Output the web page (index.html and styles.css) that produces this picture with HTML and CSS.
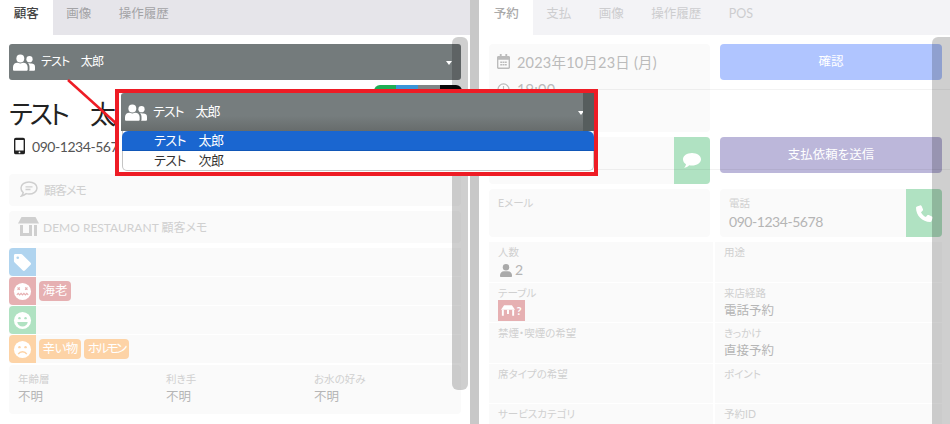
FILE: index.html
```html
<!DOCTYPE html>
<html lang="ja">
<head>
    <meta charset="UTF-8">
    <title>顧客 / 予約</title>
    <link rel="stylesheet" href="styles.css">
</head>
<body>
    <div class="app">
        <!-- Customer pane -->
        <section class="pane">
            <div class="tabs">
                <div class="tab active">顧客</div>
                <div class="tab">画像</div>
                <div class="tab">操作履歴</div>
            </div>
            <div class="pane-body">
                <div class="select">
                    <svg class="users-icon" viewBox="0 0 24 18"><circle cx="8" cy="4.6" r="4.3"/><circle cx="18" cy="5.4" r="3.4"/><path d="M0 17v-3c0-3.200 2.400-4.800 4.500-4.800 1 0 2 .8 3.500.8s2.500-.8 3.500-.8c2.100 0 4.500 1.600 4.500 4.800v3c0 .6-.4 1-1 1H1c-.6 0-1-.4-1-1z"/><path d="M17.500 18c.3-.4.500-.9.500-1.500v-2.700c0-1.600-.6-3-1.600-3.900.5-.2 1-.2 1.600-.2.900 0 1.500.5 2.500.5 1.400 0 3.500.7 3.500 3.500v3.300c0 .6-.4 1-1 1z"/></svg>
                    <span class="select-name">テスト　太郎</span>
                    <span class="caret"></span>
                </div>
                <div class="name-row">
                    <h1 class="name">テスト　太郎</h1>
                    <div class="color-strip">
                        <span class="c-green"></span><span class="c-blue"></span><span class="c-gray"></span><span class="c-black"></span>
                    </div>
                </div>
                <div class="phone">
                    <svg class="phone-icon" viewBox="0 0 12 18"><path d="M2 0h8a2 2 0 0 1 2 2v14a2 2 0 0 1-2 2H2a2 2 0 0 1-2-2V2a2 2 0 0 1 2-2zm-.500 2.500v11.500h9V2.500z" fill-rule="evenodd"/><circle cx="6" cy="16" r="1" fill="#fff"/></svg>
                    <span>090-1234-5678</span>
                </div>
                <div class="memo">
                    <svg class="memo-icon" viewBox="0 0 18 16"><path d="M9 1c4.400 0 8 2.600 8 6s-3.600 6-8 6c-1 0-1.900-.1-2.800-.4C5 13.700 3.200 14.600 1.500 15c.9-1 1.500-2.200 1.700-3.300C1.800 10.600 1 8.900 1 7c0-3.400 3.600-6 8-6z" fill="none" stroke="#cfcfcf" stroke-width="1.500"/><path d="M5.500 5.800h7M5.500 8.500h5" stroke="#cfcfcf" stroke-width="1.300"/></svg>
                    <span class="memo-short">顧客メモ</span>
                </div>
                <div class="memo">
                    <svg class="store-icon" viewBox="0 0 21 19"><path d="M3.500 0h14L21 6.500H0z" fill="#cfcfcf"/><path d="M2 8h3v8h6V8h3v11H2zM16 8h3v11h-3z" fill="#cfcfcf"/></svg>
                    <span>DEMO RESTAURANT 顧客メモ</span>
                </div>
                <div class="tag-row">
                    <div class="tag-icon bg-blue">
                        <svg viewBox="0 0 20 20"><path d="M1 2.500C1 1.600 1.600 1 2.500 1h6c.5 0 .9.200 1.200.5l8.800 8.800c.6.600.6 1.500 0 2.100l-6 6c-.6.600-1.500.6-2.100 0L1.500 9.700C1.200 9.400 1 9 1 8.500z" fill="#fff"/><circle cx="5" cy="5" r="1.400" fill="#b0d4ef"/></svg>
                    </div>
                </div>
                <div class="tag-row">
                    <div class="tag-icon bg-red">
                        <svg viewBox="0 0 20 20"><circle cx="10" cy="10" r="9" fill="#fff"/><path d="M4.800 5.800l2.400 2.400m0-2.400L4.800 8.200m8-2.400l2.400 2.400m0-2.400l-2.400 2.400M4 13.500l1.500-1.500 1.500 1.500L8.500 12l1.500 1.500 1.500-1.500 1.500 1.500 1.500-1.500 1.500 1.500" fill="none" stroke="#e6b0b2" stroke-width="1.200"/></svg>
                    </div>
                    <span class="chip bg-red">海老</span>
                </div>
                <div class="tag-row">
                    <div class="tag-icon bg-green">
                        <svg viewBox="0 0 20 20"><circle cx="10" cy="10" r="9" fill="#fff"/><circle cx="6.800" cy="7.500" r="1.300" fill="#b0e2c2"/><circle cx="13.200" cy="7.500" r="1.300" fill="#b0e2c2"/><path d="M4.500 11.500h11c-.4 3-2.700 4.800-5.500 4.800s-5.100-1.800-5.500-4.800z" fill="#b0e2c2"/></svg>
                    </div>
                </div>
                <div class="tag-row">
                    <div class="tag-icon bg-orange">
                        <svg viewBox="0 0 20 20"><circle cx="10" cy="10" r="9" fill="#fff"/><circle cx="6.800" cy="7.500" r="1.300" fill="#fdd3a6"/><circle cx="13.200" cy="7.500" r="1.300" fill="#fdd3a6"/><path d="M5.500 14.800c1-1.600 2.600-2.400 4.500-2.400s3.500.8 4.500 2.400" fill="none" stroke="#fdd3a6" stroke-width="1.500"/></svg>
                    </div>
                    <span class="chip bg-orange chip-snug">辛い物</span>
                    <span class="chip bg-orange chip-tight">ホルモン</span>
                </div>
                <div class="info-box">
                    <div><div class="label">年齢層</div><div class="value">不明</div></div>
                    <div><div class="label">利き手</div><div class="value">不明</div></div>
                    <div><div class="label">お水の好み</div><div class="value">不明</div></div>
                </div>
            </div>
        </section>

        <div class="divider"></div>

        <!-- Reservation pane -->
        <section class="pane pane-right">
            <div class="tabs tabs-faded">
                <div class="tab active">予約</div>
                <div class="tab">支払</div>
                <div class="tab">画像</div>
                <div class="tab">操作履歴</div>
                <div class="tab">POS</div>
            </div>
            <div class="res-body">
                <div class="res-top">
                    <div class="card card-date">
                        <div class="date-line">
                            <svg class="line-icon" viewBox="0 0 14 16"><path d="M3 0h2v2h4V0h2v2h1.500c.8 0 1.500.7 1.500 1.500v11c0 .8-.7 1.500-1.500 1.500h-11C.7 16 0 15.300 0 14.500v-11C0 2.700.7 2 1.500 2H3zM1.500 6v8.500h11V6z" fill="#bbb" fill-rule="evenodd"/><path d="M3.500 8h2v1.500h-2zM6 8h2v1.500H6zM8.500 8h2v1.500h-2zM3.500 10.800h2v1.500h-2zM6 10.800h2v1.500H6zM8.500 10.800h2v1.500h-2z" fill="#bbb"/></svg>
                            <span>2023年10月23日 (月)</span>
                        </div>
                        <div class="date-line">
                            <svg class="line-icon" viewBox="0 0 16 16"><circle cx="8" cy="8" r="6.800" fill="none" stroke="#bbb" stroke-width="1.500"/><path d="M8 3.800V8l2.800 1.800" fill="none" stroke="#bbb" stroke-width="1.400"/></svg>
                            <span>19:00</span>
                        </div>
                    </div>
                    <div class="btn btn-confirm">確認</div>
                    <div class="card card-comment">
                        <div class="side-btn">
                            <svg class="comment-icon" viewBox="0 0 18 15"><path d="M9 0c5 0 9 2.800 9 6.300s-4 6.300-9 6.300c-1 0-1.900-.1-2.800-.3C5 13.500 3 14.800 1 15c1-1 1.800-2.400 2-3.700C1.200 10.200 0 8.400 0 6.300 0 2.800 4 0 9 0z" fill="#fff"/></svg>
                        </div>
                    </div>
                    <div class="btn btn-pay">支払依頼を送信</div>
                    <div class="card card-contact">
                        <div class="label">Eメール</div>
                    </div>
                    <div class="card card-contact">
                        <div class="label">電話</div>
                        <div class="contact-value">090-1234-5678</div>
                        <div class="side-btn">
                            <svg class="call-icon" viewBox="0 0 18 18"><path d="M4.200.4L1 1.500C.4 1.700 0 2.300 0 3c0 8.300 6.700 15 15 15 .7 0 1.300-.4 1.500-1l1.100-3.200c.2-.7-.1-1.400-.7-1.700l-3.500-1.500c-.6-.2-1.200-.1-1.600.4l-1.400 1.700C8 11.500 6.400 9.900 5.300 7.600L7 6.200c.5-.4.600-1 .4-1.600L5.900 1.100C5.600.5 4.900.2 4.200.4z" fill="#fff"/></svg>
                        </div>
                    </div>
                </div>
                <div class="res-table">
                    <div class="cell">
                        <div class="label">人数</div>
                        <div class="value count">
                            <svg class="person-icon" viewBox="0 0 12 13"><circle cx="6" cy="3.200" r="3.200" fill="#aaa"/><path d="M0 11.500C0 9 1.800 7.200 3.800 7.200h4.400c2 0 3.800 1.800 3.800 4.300V12c0 .6-.4 1-1 1H1c-.6 0-1-.4-1-1z" fill="#aaa"/></svg>
                            <span>2</span>
                        </div>
                    </div>
                    <div class="cell"><div class="label">用途</div></div>
                    <div class="cell">
                        <div class="label">テーブル</div>
                        <div class="table-badge">
                            <svg viewBox="0 0 16 12"><path d="M3.500 0h9L16 5H0z" fill="#fff"/><path d="M1 5h2.200v7H1zM6.900 5h2.200v5H6.900zM12.800 5H15v7h-2.200z" fill="#fff"/></svg>
                            <span>?</span>
                        </div>
                    </div>
                    <div class="cell"><div class="label">来店経路</div><div class="value">電話予約</div></div>
                    <div class="cell"><div class="label">禁煙・喫煙の希望</div></div>
                    <div class="cell"><div class="label">きっかけ</div><div class="value">直接予約</div></div>
                    <div class="cell"><div class="label">席タイプの希望</div></div>
                    <div class="cell"><div class="label">ポイント</div></div>
                    <div class="cell"><div class="label">サービスカテゴリ</div></div>
                    <div class="cell"><div class="label">予約ID</div></div>
                </div>
            </div>
        </section>
    </div>

    <!-- Scrollbars sit over the panes -->
    <div class="scroll-thumb scroll-left"></div>
    <div class="scroll-thumb scroll-right"></div>
    <div class="faint-line line-a"></div>
    <div class="faint-line line-b"></div>

    <!-- Callout: line from the select to the opened dropdown -->
    <svg class="callout-line" width="130" height="135" viewBox="0 0 130 135"><line x1="68" y1="80" x2="118" y2="125" stroke="#ee1c25" stroke-width="2.500"/></svg>
    <div class="callout">
        <div class="select select-open">
            <svg class="users-icon" viewBox="0 0 24 18"><circle cx="8" cy="4.6" r="4.3"/><circle cx="18" cy="5.4" r="3.4"/><path d="M0 17v-3c0-3.200 2.400-4.800 4.500-4.800 1 0 2 .8 3.500.8s2.500-.8 3.500-.8c2.100 0 4.500 1.600 4.500 4.800v3c0 .6-.4 1-1 1H1c-.6 0-1-.4-1-1z"/><path d="M17.500 18c.3-.4.500-.9.500-1.500v-2.700c0-1.600-.6-3-1.600-3.900.5-.2 1-.2 1.600-.2.900 0 1.500.5 2.500.5 1.400 0 3.500.7 3.500 3.500v3.300c0 .6-.4 1-1 1z"/></svg>
            <span class="select-name">テスト　太郎</span>
            <span class="caret"></span>
            <span class="select-thumb"></span>
        </div>
        <div class="options">
            <div class="option selected">テスト　太郎</div>
            <div class="option">テスト　次郎</div>
        </div>
    </div>
</body>
</html>
```

FILE: styles.css
```css
:root {
    --blue: #b0d4ef;
    --red: #e6b0b2;
    --green: #b0e2c2;
    --orange: #fdd3a6;
    --card: #fafafa;
    --label: #d0d0d0;
    --value: #b5b5b5;
}

* {
    box-sizing: border-box;
}

body {
    margin: 0;
    height: 424px;
    overflow: hidden;
    position: relative;
    background: #fff;
    font-family: "Lato", "Noto Sans CJK JP", sans-serif;
    font-size: 13px;
    font-feature-settings: "palt";
}

.app {
    display: flex;
    height: 424px;
}

.pane {
    width: 470px;
    flex: none;
    overflow: hidden;
}

.divider {
    width: 10px;
    flex: none;
    background: #c8c8c8;
    border-right: 1px solid #fff;
}

/* Tabs */
.tabs {
    display: flex;
    height: 35px;
    background: #e6e5ea;
    color: #a3a3a6;
    font-size: 12.500px;
}

.tab {
    padding: 0 13.750px;
    line-height: 28px;
}

.tab.active {
    background: #fff;
    color: #444;
    font-weight: 500;
}

.tabs-faded {
    background: #f3f3f6;
    color: #cdcdcf;
}

.tabs-faded .tab.active {
    color: #aaa;
}

.pane-body {
    padding: 9px 9px 0;
}

/* Customer select */
.select {
    display: flex;
    align-items: center;
    height: 36px;
    background: #747b7c;
    border-radius: 3px;
    color: #fff;
    padding: 0 9px 0 4px;
}

.users-icon {
    width: 22px;
    height: 17px;
    fill: #fff;
    flex: none;
}

.select-name {
    margin: 0 0 4px 6px;
    font-size: 12px;
    letter-spacing: -0.8px;
    flex: 1;
}

.caret {
    width: 0;
    height: 0;
    border-left: 3px solid transparent;
    border-right: 3px solid transparent;
    border-top: 4px solid #fff;
    margin-top: 2px;
}

.name-row {
    display: flex;
    justify-content: space-between;
    margin-top: 5px;
    height: 49px;
}

.name {
    margin: 11px 0 0;
    font-size: 26px;
    font-weight: 400;
    line-height: 36px;
    color: #222;
    letter-spacing: -3px;
    word-spacing: 11px;
}

.color-strip {
    display: flex;
    height: 20px;
    border-radius: 6px 6px 0 0;
    overflow: hidden;
    margin-right: -1px;
}

.color-strip span {
    width: 22px;
}

.c-green { background: #1eae55; }
.c-blue { background: #3a96d8; }
.c-gray { background: #7f8586; }
.c-black { background: #0a0a0a; }

.phone {
    display: flex;
    align-items: center;
    gap: 7px;
    height: 24px;
    margin-left: 5px;
    color: #555;
    font-size: 14px;
    letter-spacing: -0.45px;
}

.phone-icon {
    width: 11px;
    height: 18px;
    fill: #222;
}

/* Memo boxes */
.memo {
    display: flex;
    align-items: center;
    gap: 6px;
    height: 32px;
    margin-top: 5px;
    padding: 0 0 2px 9px;
    background: var(--card);
    border-radius: 4px;
    color: var(--label);
    font-size: 12px;
    width: 452px;
}

.phone + .memo {
    margin-top: 16px;
}

.memo-short {
    letter-spacing: -1px;
}

.memo-icon {
    width: 18px;
    height: 16px;
    margin-left: 2px;
}

.store-icon {
    width: 21px;
    height: 19px;
    margin-right: -2px;
}

/* Tag rows */
.tag-row {
    display: flex;
    align-items: center;
    gap: 3px;
    height: 28px;
    margin-top: 1px;
    background: var(--card);
    width: 452px;
}

.memo + .tag-row {
    margin-top: 5px;
}

.tag-icon {
    width: 27px;
    height: 28px;
    border-radius: 4px 0 0 4px;
    display: flex;
    align-items: center;
    justify-content: center;
}

.tag-icon svg {
    width: 19px;
    height: 19px;
}

.bg-blue { background: var(--blue); }
.bg-red { background: var(--red); }
.bg-green { background: var(--green); }
.bg-orange { background: var(--orange); }

.chip {
    height: 20px;
    line-height: 20px;
    padding: 0 3.500px;
    border-radius: 4px;
    color: #fff;
    font-size: 12.500px;
}

.chip-snug {
    letter-spacing: -0.5px;
}

.chip-tight {
    letter-spacing: -2.500px;
    padding-right: 4px;
}

/* Info box */
.info-box {
    display: grid;
    grid-template-columns: repeat(3, 148px);
    height: 49px;
    margin-top: 2px;
    padding: 7px 0 0 9px;
    background: var(--card);
    border-radius: 4px;
    width: 452px;
}

.label {
    font-size: 10.500px;
    line-height: 14px;
    color: var(--label);
}

.value {
    margin-top: 2px;
    font-size: 12.500px;
    line-height: 18px;
    color: var(--value);
}

/* Reservation side */
.res-body {
    padding: 9px 8px 0 9px;
}

.res-top {
    display: grid;
    grid-template-columns: 221px 222px;
    column-gap: 10px;
    row-gap: 5px;
    align-items: start;
}

.card {
    background: var(--card);
    border-radius: 4px;
    position: relative;
    overflow: hidden;
}

.card-date {
    height: 88px;
    padding: 6px 0 0 8px;
    color: #bbb;
    font-size: 14.500px;
}

.date-line {
    display: flex;
    align-items: center;
    gap: 7px;
    height: 22px;
    margin-bottom: 6px;
    letter-spacing: 0.2px;
}

.line-icon {
    width: 13px;
    height: 15px;
    flex: none;
}

.card-comment {
    height: 47px;
}

.card-contact {
    height: 48px;
    padding: 7px 9px;
}

.side-btn {
    position: absolute;
    top: 0;
    right: 0;
    width: 36px;
    height: 100%;
    background: var(--green);
    display: flex;
    align-items: center;
    justify-content: center;
}

.comment-icon {
    width: 18px;
    height: 15px;
}

.call-icon {
    width: 17px;
    height: 17px;
}

.contact-value {
    margin-top: 3px;
    font-size: 14px;
    line-height: 18px;
    color: var(--value);
    letter-spacing: -0.45px;
}

.btn {
    height: 36px;
    line-height: 36px;
    border-radius: 4px;
    color: #fff;
    text-align: center;
    font-size: 12.500px;
}

.btn-confirm { background: #b0c5ff; }
.btn-pay { background: #bcb7da; }

.res-table {
    display: grid;
    grid-template-columns: 224px 227px;
    grid-auto-rows: 39.500px;
    gap: 1px 2px;
    margin-top: 5px;
}

.cell {
    background: var(--card);
    padding: 3px 9px 0;
}

.count {
    display: flex;
    align-items: center;
    gap: 3px;
    margin-left: 2px;
    font-size: 14px;
}

.person-icon {
    width: 12px;
    height: 13px;
}

.table-badge {
    display: flex;
    align-items: center;
    justify-content: center;
    gap: 1px;
    width: 27px;
    height: 21px;
    background: var(--red);
    color: #fff;
    font-weight: 700;
    font-size: 11px;
}

.table-badge svg {
    width: 14px;
    height: 11px;
}

/* Overlays */
.scroll-thumb {
    position: absolute;
    top: 37px;
    background: rgba(0, 0, 0, 0.19);
}

.scroll-left {
    left: 452px;
    width: 16px;
    height: 353px;
    border-radius: 6px;
}

.scroll-right {
    left: 932px;
    width: 18px;
    bottom: 0;
    border-radius: 6px 0 0 0;
}

.faint-line {
    position: absolute;
    left: 480px;
    right: 0;
    height: 1px;
    background: rgba(0, 0, 0, 0.05);
}

.line-a { top: 89px; }
.line-b { top: 169px; }

.callout-line {
    position: absolute;
    top: 0;
    left: 0;
}

.callout {
    position: absolute;
    left: 115px;
    top: 89px;
    width: 483px;
    height: 87px;
    border: 4px solid #ee1c25;
    background: #fff;
    padding: 0 0 0 2px;
}

.select-open {
    position: relative;
    height: 38px;
    background: linear-gradient(#767d7e 60%, #676c6c);
    border-radius: 3px 0 0 0;
    padding: 0 10px 0 4px;
}

.select-thumb {
    position: absolute;
    top: 0;
    right: 0;
    width: 11px;
    height: 100%;
    background: #565d5d;
}

.select-open .select-name {
    font-size: 13px;
    letter-spacing: -1px;
    margin: 0 0 3px 6px;
}

.options {
    width: 472px;
    height: 40px;
    margin-left: 1px;
    font-size: 13px;
    letter-spacing: -0.5px;
    border: solid #c4c4c4;
    border-width: 0 1px 1px;
    border-radius: 0 0 5px 5px;
}

.option {
    height: 19.500px;
    line-height: 19px;
    padding-left: 31px;
    color: #333;
}

.option.selected {
    background: #1a66d0;
    border-bottom: 1px solid #1157b8;
    color: #fff;
    border-radius: 6px 6px 0 0;
    margin: 0 -1px;
    padding-left: 32px;
}
```
